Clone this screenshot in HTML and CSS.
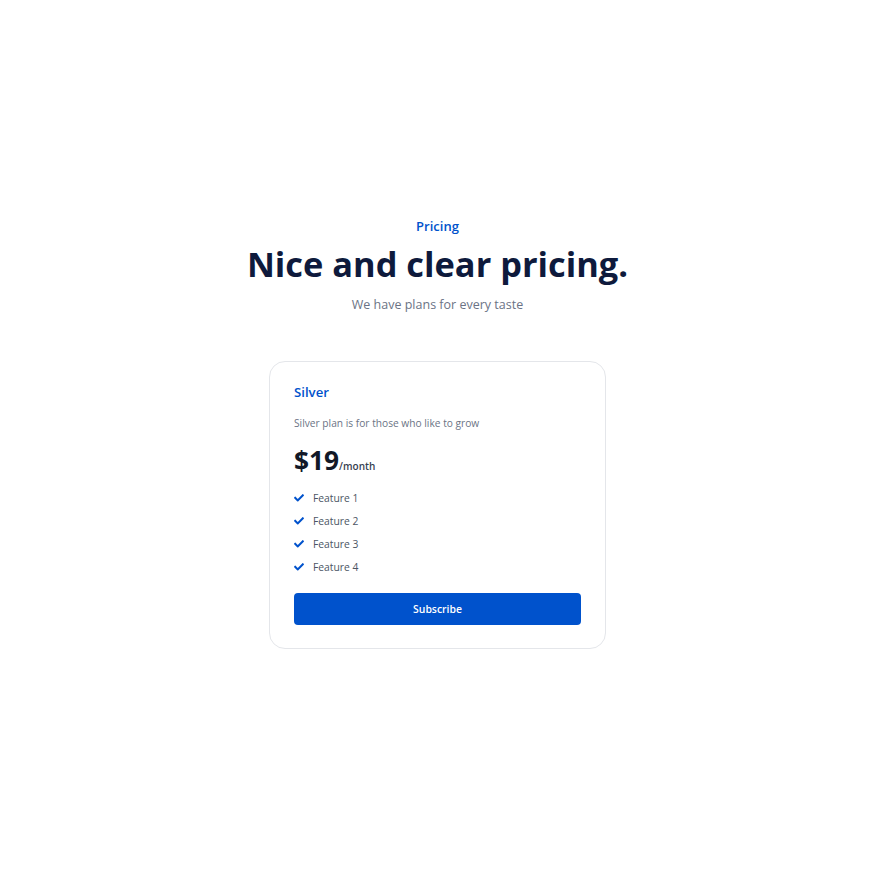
FILE: index.html
```html
<!DOCTYPE html>
<html>
<head>
<meta charset="utf-8">
<link rel="stylesheet" href="styles.css">
</head>
<body>
<main class="page">
  <section class="pricing">
    <p class="eyebrow">Pricing</p>
    <h1 class="title">Nice and clear pricing.</h1>
    <p class="subtitle">We have plans for every taste</p>
    <div class="card">
      <h2 class="plan">Silver</h2>
      <p class="desc">Silver plan is for those who like to grow</p>
      <div class="price"><span class="amount">$19</span><span class="per">/month</span></div>
      <ul class="features">
        <li><svg class="check" viewBox="0 0 512 400" width="10" height="8"><path d="M173.9 375.4l-166.4-166.4c-10-10-10-26.2 0-36.2l36.2-36.2c10-10 26.2-10 36.2 0L192 248.7 432.1 8.6c10-10 26.2-10 36.2 0l36.2 36.2c10 10 10 26.2 0 36.2l-294.4 294.4c-10 10-26.2 10-36.2 0z" fill="#0052cc"/></svg>Feature 1</li>
        <li><svg class="check" viewBox="0 0 512 400" width="10" height="8"><path d="M173.9 375.4l-166.4-166.4c-10-10-10-26.2 0-36.2l36.2-36.2c10-10 26.2-10 36.2 0L192 248.7 432.1 8.6c10-10 26.2-10 36.2 0l36.2 36.2c10 10 10 26.2 0 36.2l-294.4 294.4c-10 10-26.2 10-36.2 0z" fill="#0052cc"/></svg>Feature 2</li>
        <li><svg class="check" viewBox="0 0 512 400" width="10" height="8"><path d="M173.9 375.4l-166.4-166.4c-10-10-10-26.2 0-36.2l36.2-36.2c10-10 26.2-10 36.2 0L192 248.7 432.1 8.6c10-10 26.2-10 36.2 0l36.2 36.2c10 10 10 26.2 0 36.2l-294.4 294.4c-10 10-26.2 10-36.2 0z" fill="#0052cc"/></svg>Feature 3</li>
        <li><svg class="check" viewBox="0 0 512 400" width="10" height="8"><path d="M173.9 375.4l-166.4-166.4c-10-10-10-26.2 0-36.2l36.2-36.2c10-10 26.2-10 36.2 0L192 248.7 432.1 8.6c10-10 26.2-10 36.2 0l36.2 36.2c10 10 10 26.2 0 36.2l-294.4 294.4c-10 10-26.2 10-36.2 0z" fill="#0052cc"/></svg>Feature 4</li>
      </ul>
      <button class="subscribe">Subscribe</button>
    </div>
  </section>
</main>
</body>
</html>
```
FILE: styles.css
```css
* { box-sizing: border-box; }
html, body { margin: 0; padding: 0; background: #ffffff; }
body { font-family: "Open Sans", "Noto Sans", sans-serif; }
.page {
  min-height: 884px;
  display: flex;
  align-items: center;
  justify-content: center;
  padding: 0 9px 19px 0;
}
.pricing {
  display: flex;
  flex-direction: column;
  align-items: center;
}
.eyebrow {
  margin: 0;
  font-size: 13px;
  line-height: 20px;
  font-weight: 600;
  color: #0052cc;
}
.title {
  margin: 7px 0 0;
  font-size: 34.4px;
  line-height: 42px;
  font-weight: 700;
  color: #0e1a3c;
}
.subtitle {
  margin: 10px 0 0;
  font-size: 12.5px;
  line-height: 20px;
  color: #6b7385;
}
.card {
  margin-top: 46px;
  width: 337px;
  border: 1px solid #e4e6ea;
  border-radius: 16px;
  padding: 20px 24px 23px;
  display: flex;
  flex-direction: column;
}
.plan {
  margin: 0;
  font-size: 13.2px;
  line-height: 20px;
  font-weight: 600;
  color: #0052cc;
}
.desc {
  margin: 13px 0 0;
  font-size: 10.2px;
  line-height: 16px;
  color: #6b7385;
}
.price {
  margin-top: 13px;
  height: 32px;
  display: flex;
  align-items: baseline;
  color: #111827;
}
.amount {
  font-size: 26.3px;
  line-height: 32px;
  font-weight: 700;
}
.per {
  font-size: 10px;
  line-height: 12px;
  font-weight: 600;
  color: #374151;
}
.features {
  list-style: none;
  margin: 14px 0 0;
  padding: 0;
  display: flex;
  flex-direction: column;
  gap: 7px;
}
.features li {
  display: flex;
  align-items: center;
  gap: 9px;
  height: 16px;
  font-size: 10.3px;
  line-height: 16px;
  color: #4b5563;
}
.check { flex: none; }
.subscribe {
  margin-top: 18px;
  height: 32px;
  border: none;
  border-radius: 4px;
  background: #0052cc;
  color: #ffffff;
  font-family: "Open Sans", "Noto Sans", sans-serif;
  font-size: 10.4px;
  font-weight: 600;
}
```
